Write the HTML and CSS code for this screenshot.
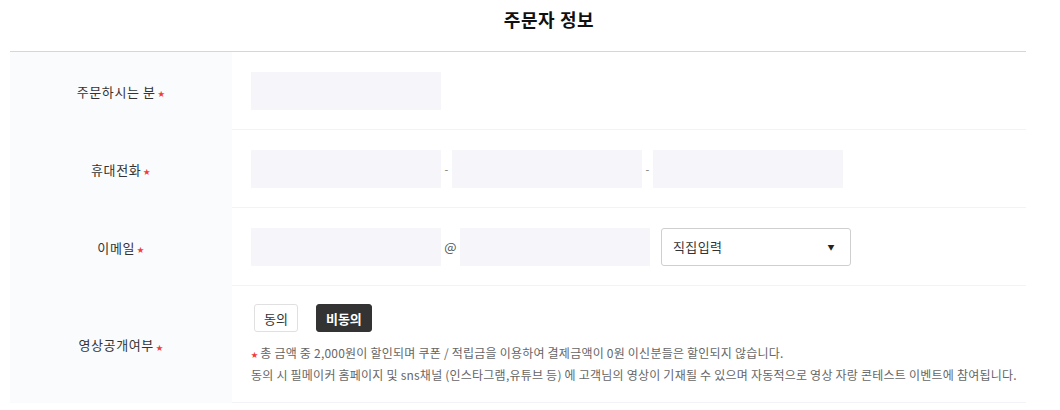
FILE: index.html
```html
<!doctype html>
<html>
<head>
  <meta charset="utf-8">
  <title>주문자 정보</title>
  <link rel="stylesheet" href="styles.css">
</head>
<body>
  <div class="order-info">
    <h2 class="order-title">주문자 정보</h2>

    <div class="form-table">
      <div class="form-label">주문하시는 분<span class="req">★</span></div>
      <div class="form-value">
        <input type="text" class="field">
      </div>

      <div class="form-label">휴대전화<span class="req">★</span></div>
      <div class="form-value">
        <input type="text" class="field">
        <span class="sep">-</span>
        <input type="text" class="field">
        <span class="sep">-</span>
        <input type="text" class="field">
      </div>

      <div class="form-label">이메일<span class="req">★</span></div>
      <div class="form-value">
        <input type="text" class="field">
        <span class="at">@</span>
        <input type="text" class="field">
        <div class="select-box">
          <span>직집입력</span>
          <span class="arrow">▼</span>
        </div>
      </div>

      <div class="form-label">영상공개여부<span class="req">★</span></div>
      <div class="form-value agree-cell">
        <div class="btn-group">
          <button type="button" class="btn">동의</button>
          <button type="button" class="btn on">비동의</button>
        </div>
        <p class="notice"><span class="req">★</span>총 금액 중 2,000원이 할인되며 쿠폰 / 적립금을 이용하여 결제금액이 0원 이신분들은 할인되지 않습니다.</p>
        <p class="notice">동의 시 필메이커 홈페이지 및 sns채널 (인스타그램,유튜브 등) 에 고객님의 영상이 기재될 수 있으며 자동적으로 영상 자랑 콘테스트 이벤트에 참여됩니다.</p>
      </div>
    </div>
  </div>
</body>
</html>
```

FILE: styles.css
```css
* {
    margin: 0;
    padding: 0;
    box-sizing: border-box;
}
body {
    font-family: "Noto Sans CJK KR", "Noto Sans", sans-serif;
    background: #fff;
    color: #333;
}
.order-info {
    margin: 0 34px 0 10px;
}
.order-title {
    height: 52px;
    padding: 7px 0 0 62px;
    text-align: center;
    font-size: 18px;
    line-height: 24px;
    font-weight: bold;
    letter-spacing: 0.6px;
    color: #111;
    border-bottom: 1px solid #d6d6d6;
}
.form-table {
    display: grid;
    grid-template-columns: 222px 1fr;
}
.form-label {
    display: flex;
    align-items: center;
    justify-content: center;
    background: #fafbfc;
    font-size: 13px;
    letter-spacing: 0.6px;
    color: #333;
}
.req {
    color: #f23a3a;
    font-size: 7px;
    margin-left: 2px;
    position: relative;
    top: 2px;
}
.form-value {
    display: flex;
    align-items: center;
    height: 78px;
    padding-left: 19px;
    border-bottom: 1px solid #f3f3f5;
}
.field {
    width: 190px;
    height: 38px;
    border: none;
    background: #f6f6fa;
    outline: none;
}
.sep {
    width: 11px;
    text-align: center;
    font-size: 11px;
    color: #777;
}
.at {
    width: 19px;
    text-align: center;
    font-size: 13px;
    color: #555;
}
.select-box {
    display: flex;
    align-items: center;
    justify-content: space-between;
    width: 190px;
    height: 38px;
    margin-left: 11px;
    padding: 0 15px 0 11px;
    border: 1px solid #cfcfcf;
    border-radius: 3px;
    font-size: 13px;
    letter-spacing: 0.4px;
    color: #333;
}
.select-box .arrow {
    font-size: 7px;
    color: #222;
}
.agree-cell {
    display: block;
    height: 117px;
    padding-top: 18px;
}
.btn-group {
    display: flex;
    gap: 18px;
    padding-left: 3px;
    margin-bottom: 11px;
}
.btn {
    height: 28px;
    padding: 0 9px;
    border: 1px solid #e0e0e0;
    border-radius: 3px;
    background: #fff;
    font-family: inherit;
    font-size: 13px;
    color: #333;
}
.btn.on {
    background: #333;
    border-color: #333;
    color: #fff;
    font-weight: bold;
}
.notice {
    font-size: 12px;
    line-height: 20px;
    letter-spacing: 0.22px;
    color: #666;
}
.notice .req {
    margin: 0 2px 0 0;
    top: -1px;
}
```
